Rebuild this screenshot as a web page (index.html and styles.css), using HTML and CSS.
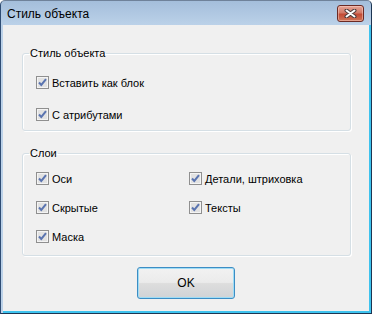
FILE: index.html
```html
<!DOCTYPE html>
<html lang="ru">

<head>
    <meta charset="UTF-8">
    <title>Стиль объекта</title>
    <link rel="stylesheet" href="styles.css">
</head>

<body>
    <div class="window">
        <div class="titlebar">
            <span class="title">Стиль объекта</span>
            <button class="close" type="button">
                <svg width="13" height="9" viewBox="0 0 13 9">
                    <path d="M2.5 1.5 L10.5 7.5 M10.5 1.5 L2.5 7.5" stroke="#4a3a3a" stroke-width="4" stroke-linecap="round" fill="none"/>
                    <path d="M2.5 1.5 L10.5 7.5 M10.5 1.5 L2.5 7.5" stroke="#fff" stroke-width="2" stroke-linecap="round" fill="none"/>
                </svg>
            </button>
        </div>

        <div class="client">
            <!-- Стиль объекта -->
            <fieldset class="group first">
                <legend>Стиль объекта</legend>
                <div class="list">
                    <label class="check"><span class="box"></span>Вставить как блок</label>
                    <label class="check"><span class="box"></span>С атрибутами</label>
                </div>
            </fieldset>

            <!-- Слои -->
            <fieldset class="group second">
                <legend>Слои</legend>
                <div class="grid">
                    <label class="check"><span class="box"></span>Оси</label>
                    <label class="check"><span class="box"></span>Детали, штриховка</label>
                    <label class="check"><span class="box"></span>Скрытые</label>
                    <label class="check"><span class="box"></span>Тексты</label>
                    <label class="check"><span class="box"></span>Маска</label>
                </div>
            </fieldset>

            <div class="actions">
                <button class="btn" type="button">OK</button>
            </div>
        </div>
    </div>
</body>

</html>
```

FILE: styles.css
```css
body {
    margin: 0;
    font-family: "Liberation Sans", Arial, sans-serif;
    font-size: 11px;
    color: #000;
}

.window {
    width: 372px;
    height: 314px;
    box-sizing: border-box;
    display: flex;
    flex-direction: column;
    background: linear-gradient(#a4bedb, #bcd2e9 25px, #bcd2e9);
    border-top: 1px solid #6f829a;
    border-left: 1px solid #2f4d74;
    border-right: 1px solid #1d3552;
    border-bottom: 1px solid #1d3552;
    border-radius: 5px 5px 0 0;
}

.titlebar {
    height: 24px;
    display: flex;
    align-items: flex-start;
    padding: 0 7px 0 6px;
}

.title {
    margin-top: 6px;
    font-size: 12px;
    line-height: 14px;
    color: #000;
}

.close {
    margin-left: auto;
    margin-top: 4px;
    width: 27px;
    height: 17px;
    padding: 0;
    border: 1px solid #6b2a24;
    border-radius: 3px;
    background: linear-gradient(#e5a496, #d27a68 45%, #c34a34 55%, #cf7558);
    box-shadow: inset 0 0 0 1px rgba(255, 220, 210, 0.45);
    display: flex;
    align-items: center;
    justify-content: center;
}

.client {
    flex: 1;
    margin-left: 2px;
    background: #f0f0f0;
    border-right: 2px solid #3ec3ee;
    border-bottom: 2px solid #3ec3ee;
    display: flex;
    flex-direction: column;
}

.group {
    margin: 0 18px 0 19px;
    padding: 0 0 0 6px;
    border: 1px solid #d5dfe5;
    border-radius: 3px;
    box-shadow: inset 1px 1px 0 #fff, 1px 1px 0 #fff;
    min-width: 0;
}

.group.first {
    margin-top: 21px;
}

.group.second {
    margin-top: 15px;
}

.group legend {
    padding: 0 1px;
    line-height: 14px;
}

.list {
    display: flex;
    flex-direction: column;
    gap: 19px;
    padding: 16px 0 9px 7px;
}

.grid {
    display: grid;
    grid-template-columns: 153px 1fr;
    row-gap: 16px;
    padding: 12px 0 12px 7px;
}

.check {
    display: flex;
    align-items: center;
    height: 13px;
    line-height: 14px;
    white-space: nowrap;
}

.box {
    width: 13px;
    height: 13px;
    box-sizing: border-box;
    margin-right: 3px;
    border: 1px solid #8f8f8f;
    background-color: #e2e2e2;
    box-shadow: inset 0 0 0 1px #f4f4f4;
    background-image: url("data:image/svg+xml,%3Csvg xmlns='http://www.w3.org/2000/svg' width='11' height='11'%3E%3Cpath d='M2 5.5 L4.3 8 L9 2.2' stroke='%235a74b0' stroke-width='2' fill='none'/%3E%3C/svg%3E");
    background-repeat: no-repeat;
    flex-shrink: 0;
}

.actions {
    display: flex;
    justify-content: center;
    margin-top: 11px;
}

.btn {
    width: 98px;
    height: 32px;
    padding: 0;
    font-family: "Liberation Sans", Arial, sans-serif;
    font-size: 12px;
    color: #000;
    border: 1px solid #3c8dc4;
    border-radius: 3px;
    background: linear-gradient(#f2f2f2, #ebebeb 48%, #dddddd 52%, #d1d3d6);
    box-shadow: inset 0 0 0 1px #9fdcf5;
}
```
